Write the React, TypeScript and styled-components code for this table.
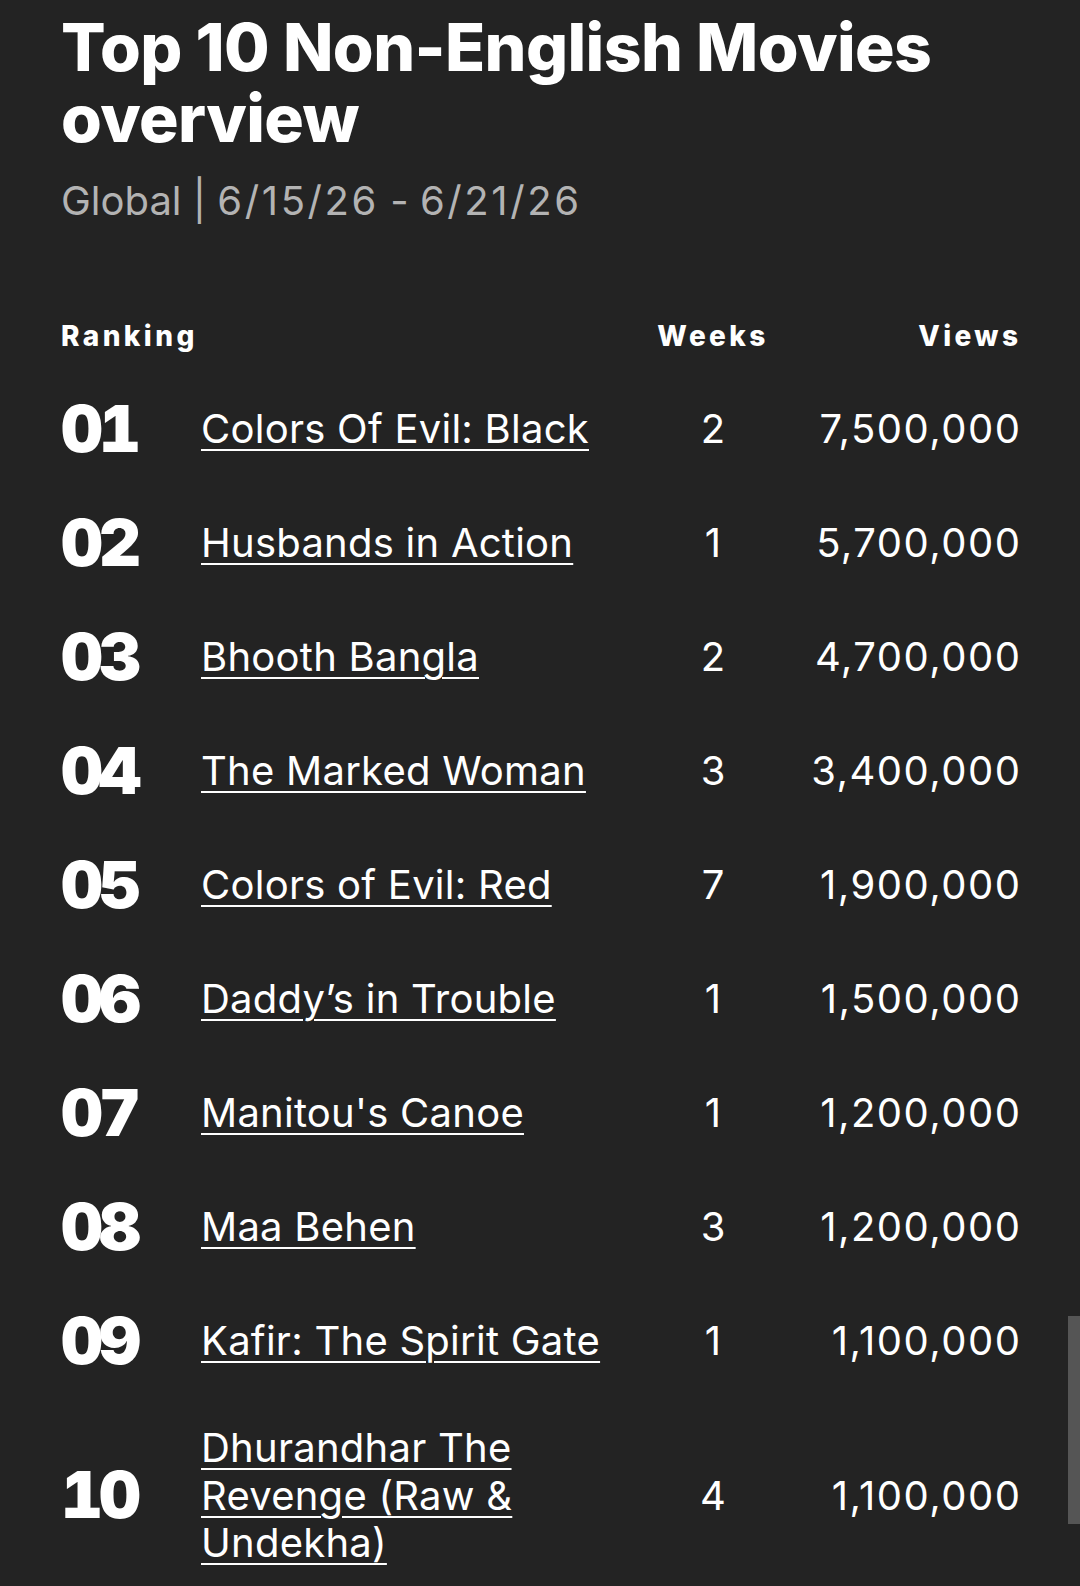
import styled, { createGlobalStyle } from 'styled-components';

interface IMovieRow {
  rank: string;
  title: string;
  weeks: number;
  views: string;
}

const rows: IMovieRow[] = [
  { rank: '01', title: 'Colors Of Evil: Black', weeks: 2, views: '7,500,000' },
  { rank: '02', title: 'Husbands in Action', weeks: 1, views: '5,700,000' },
  { rank: '03', title: 'Bhooth Bangla', weeks: 2, views: '4,700,000' },
  { rank: '04', title: 'The Marked Woman', weeks: 3, views: '3,400,000' },
  { rank: '05', title: 'Colors of Evil: Red', weeks: 7, views: '1,900,000' },
  { rank: '06', title: 'Daddy’s in Trouble', weeks: 1, views: '1,500,000' },
  { rank: '07', title: "Manitou's Canoe", weeks: 1, views: '1,200,000' },
  { rank: '08', title: 'Maa Behen', weeks: 3, views: '1,200,000' },
  { rank: '09', title: 'Kafir: The Spirit Gate', weeks: 1, views: '1,100,000' },
  { rank: '10', title: 'Dhurandhar The Revenge (Raw & Undekha)', weeks: 4, views: '1,100,000' },
];

const GlobalStyle = createGlobalStyle`
  html, body {
    margin: 0;
    padding: 0;
    background: #232323;
  }
  body {
    font-family: Inter, "Noto Sans", "Liberation Sans", sans-serif;
    color: #fff;
  }
`;

const Page = styled.div`
  min-height: 1586px;
  box-sizing: border-box;
  padding: 12px 62px 0 61px;
  background: #232323;
  overflow: hidden;
`;

const Heading = styled.h1`
  margin: 0;
  font-size: 66px;
  line-height: 71px;
  font-weight: 800;
  letter-spacing: -0.6px;
  color: #fff;
`;

const Subtitle = styled.div`
  margin-top: 23px;
  font-size: 40px;
  line-height: 48px;
  font-weight: 400;
  color: #b3b3b3;
`;

const DateText = styled.span`
  letter-spacing: 2.6px;
`;

const Table = styled.div`
  margin-top: 94px;
  display: grid;
  grid-template-columns: 140px 430px 164px 1fr;
`;

const HeadCell = styled.div<{ align: 'left' | 'center' | 'right' }>`
  font-size: 28px;
  line-height: 34px;
  font-weight: 800;
  letter-spacing: 3.4px;
  text-align: ${(p) => p.align};
  margin-bottom: 19px;
  margin-right: ${(p) => (p.align === 'right' ? '-3.4px' : '0')};
`;

const Cell = styled.div<{ align?: 'left' | 'center' | 'right' }>`
  display: flex;
  align-items: center;
  justify-content: ${(p) =>
    p.align === 'center' ? 'center' : p.align === 'right' ? 'flex-end' : 'flex-start'};
  padding: 26px 0;
  font-size: 40px;
  line-height: 47.5px;
`;

const Rank = styled.span`
  font-size: 65px;
  line-height: 62px;
  font-weight: 900;
  letter-spacing: -4px;
  font-variant-numeric: tabular-nums;
`;

const TitleLink = styled.a`
  color: #fff;
  letter-spacing: 0.25px;
  text-decoration: underline;
  text-decoration-thickness: 2px;
  text-underline-offset: 6px;
`;

const Views = styled.span`
  letter-spacing: 1.5px;
  margin-right: -3.5px;
`;

const ScrollThumb = styled.div`
  position: fixed;
  right: 0;
  top: 1316px;
  width: 12px;
  height: 208px;
  background: #555;
`;

export default function App() {
  return (
    <>
      <GlobalStyle />
      <Page>
        <Heading>Top 10 Non-English Movies overview</Heading>
        <Subtitle>
          Global | <DateText>6/15/26</DateText> - <DateText>6/21/26</DateText>
        </Subtitle>
        <Table>
          <HeadCell align="left">Ranking</HeadCell>
          <HeadCell align="left" />
          <HeadCell align="center">Weeks</HeadCell>
          <HeadCell align="right">Views</HeadCell>
          {rows.map((row) => (
            <Row key={row.rank} row={row} />
          ))}
        </Table>
      </Page>
      <ScrollThumb />
    </>
  );
}

const Row = ({ row }: { row: IMovieRow }) => (
  <>
    <Cell>
      <Rank>{row.rank}</Rank>
    </Cell>
    <Cell>
      <TitleLink href="#">{row.title}</TitleLink>
    </Cell>
    <Cell align="center">{row.weeks}</Cell>
    <Cell align="right">
      <Views>{row.views}</Views>
    </Cell>
  </>
);
